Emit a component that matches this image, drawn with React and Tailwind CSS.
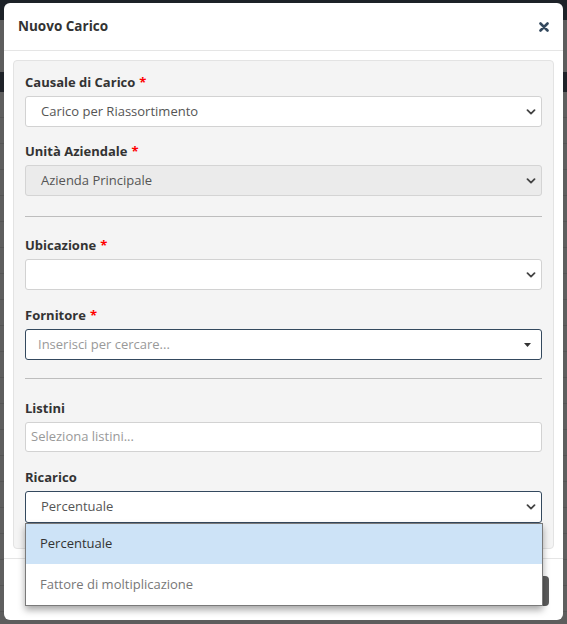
import React from "react";

function Chevron() {
  return (
    <svg width="10" height="6" viewBox="0 0 10 6" className="shrink-0">
      <path d="M1.5 1.2 L5 4.6 L8.5 1.2" fill="none" stroke="#444" strokeWidth="1.8" strokeLinecap="round" strokeLinejoin="round" />
    </svg>
  );
}

function Label({ text, required, className = "" }) {
  return (
    <div className={"h-[18px] leading-[18px] text-[13px] font-bold text-[#333] mb-[5px] " + className}>
      {text}
      {required && <span className="text-[#ff0000] ml-[4px]">*</span>}
    </div>
  );
}

function SelectBox({ value, disabled, focused, className = "" }) {
  return (
    <div
      className={
        "h-[31px] flex items-center justify-between pl-[15px] pr-[5px] rounded-[3px] border text-[13px] text-[#555] " +
        (disabled ? "bg-[#ebebeb] border-[#d4d4d4] " : "bg-white ") +
        (focused ? "border-[#34495e] " : disabled ? "" : "border-[#d2d2d2] ") +
        className
      }
    >
      <span>{value}</span>
      <Chevron />
    </div>
  );
}

export default function App() {
  return (
    <div
      className="relative w-[567px] h-[624px] overflow-hidden bg-[#5d5d5d]"
      style={{ fontFamily: '"Open Sans", "Noto Sans", sans-serif' }}
    >
      {/* backdrop page (dimmed) */}
      <div className="absolute inset-0 flex flex-col">
        <div className="h-[20px] bg-[#1d2228]" />
        <div className="h-[52px] bg-[#5d5d5d]" />
        <div className="h-[20px] bg-[#1f2329]" />
        {[0, 1, 2, 3, 4, 5, 6, 7, 8, 9, 10, 11, 12, 13, 14, 15, 16, 17, 18, 19].map((i) => (
          <div key={i} className="h-[26px] border-b border-[#555] bg-[#5f5f5f]" />
        ))}
      </div>

      {/* modal */}
      <div className="absolute left-[4px] top-[3px] w-[559px] h-[617px] bg-white rounded-[6px] flex flex-col">
        {/* header */}
        <div className="h-[48px] shrink-0 border-b border-[#e5e5e5] flex items-center justify-between pl-[14px] pr-[14px]">
          <span className="text-[13.5px] font-bold text-[#333]">Nuovo Carico</span>
          <svg width="10" height="10" viewBox="0 0 10 10">
            <path d="M1.5 1.5 L8.5 8.5 M8.5 1.5 L1.5 8.5" stroke="#34495e" strokeWidth="2.6" strokeLinecap="round" />
          </svg>
        </div>

        {/* body */}
        <div className="p-[9px]">
          <div className="bg-[#f4f4f4] border border-[#e3e3e3] rounded-[4px] px-[11px] pt-[12px] pb-[25px]">
            <Label text="Causale di Carico" required />
            <SelectBox value="Carico per Riassortimento" />

            <Label text="Unità Aziendale" required className="mt-[15px]" />
            <SelectBox value="Azienda Principale" disabled />

            <div className="mt-[20px] h-px bg-[#bdbdbd]" />

            <Label text="Ubicazione" required className="mt-[19px]" />
            <SelectBox value="" />

            <Label text="Fornitore" required className="mt-[16px]" />
            <div className="h-[31px] flex items-center justify-between pl-[12px] pr-[10px] rounded-[3px] border border-[#34495e] bg-white text-[13px] text-[#999]">
              <span>Inserisci per cercare...</span>
              <svg width="7" height="4" viewBox="0 0 7 4">
                <path d="M0 0 L7 0 L3.5 4 Z" fill="#333" />
              </svg>
            </div>

            <div className="mt-[18px] h-px bg-[#bdbdbd]" />

            <Label text="Listini" className="mt-[20px]" />
            <div className="h-[30px] flex items-center pl-[5px] rounded-[3px] border border-[#d2d2d2] bg-white text-[13px] text-[#999]">
              Seleziona listini...
            </div>

            <Label text="Ricarico" className="mt-[16px]" />
            <div className="relative z-10">
              <SelectBox value="Percentuale" focused className="h-[32px]" />
              <div className="absolute left-0 right-[-1px] top-full border border-[#7a7a7a] bg-white shadow-[0_4px_7px_rgba(0,0,0,0.35)]">
                <div className="h-[40px] flex items-center pl-[14px] bg-[#cde3f7] text-[13px] text-[#333]">Percentuale</div>
                <div className="h-[41px] flex items-center pl-[14px] bg-white text-[13px] text-[#777]">Fattore di moltiplicazione</div>
              </div>
            </div>
          </div>
        </div>

        {/* footer */}
        <div className="border-t border-[#e5e5e5] flex justify-end pt-[17px] pr-[14px]">
          <button className="h-[30px] px-[16px] rounded-[4px] bg-[#5d5d5d] text-white text-[13px]">Salva</button>
        </div>
      </div>
    </div>
  );
}
